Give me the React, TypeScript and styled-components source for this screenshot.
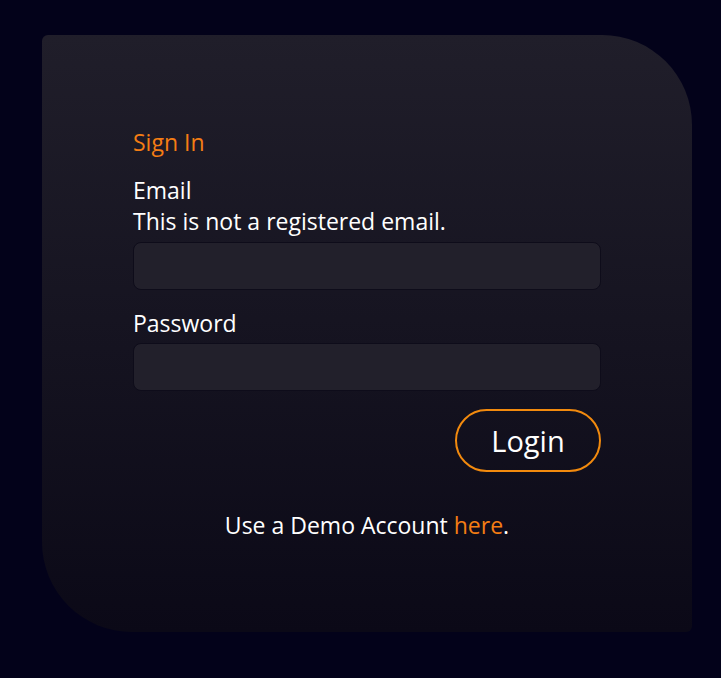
import styled, { createGlobalStyle } from "styled-components";

const GlobalStyle = createGlobalStyle`
  html, body {
    margin: 0;
    padding: 0;
    background: #03021a;
    font-family: "Open Sans", "Noto Sans", sans-serif;
    color: #ffffff;
  }
`;

const Page = styled.div`
  min-height: 678px;
  box-sizing: border-box;
  padding: 35px 0 0 42px;
`;

const Card = styled.div`
  box-sizing: border-box;
  width: 650px;
  height: 597px;
  padding: 92px 91px 0;
  border-radius: 6px 90px 6px 90px;
  background: linear-gradient(180deg, #201e2a 0%, #0b0917 100%);
  display: flex;
  flex-direction: column;
`;

const Title = styled.h1`
  margin: 0 0 17px;
  font-size: 23px;
  font-weight: 400;
  line-height: 31px;
  color: #f47d14;
`;

const Label = styled.label`
  display: block;
  font-size: 23px;
  line-height: 31px;
  color: #ffffff;
`;

const ErrorText = styled.div`
  font-size: 23px;
  line-height: 31px;
  color: #ffffff;
`;

const Input = styled.input<{ $gap: number }>`
  box-sizing: border-box;
  width: 100%;
  height: 48px;
  margin: ${(p) => p.$gap}px 0 18px;
  border: 1px solid #0e0c1a;
  border-radius: 8px;
  background: #22202b;
  color: #ffffff;
  font-family: inherit;
  font-size: 18px;
  padding: 0 12px;
  outline: none;
`;

const Actions = styled.div`
  display: flex;
  justify-content: flex-end;
`;

const LoginButton = styled.button`
  box-sizing: border-box;
  width: 146px;
  height: 63px;
  border: 2px solid #f28a0e;
  border-radius: 32px;
  background: transparent;
  color: #ffffff;
  font-family: inherit;
  font-size: 29px;
  cursor: pointer;
`;

const DemoText = styled.p`
  margin: 38px 0 0;
  text-align: center;
  font-size: 23px;
  line-height: 31px;
`;

const DemoLink = styled.a`
  color: #f47d14;
  text-decoration: none;
  cursor: pointer;
`;

export default function App() {
  return (
    <>
      <GlobalStyle />
      <Page>
        <Card>
          <Title>Sign In</Title>
          <Label htmlFor="email">Email</Label>
          <ErrorText>This is not a registered email.</ErrorText>
          <Input id="email" type="email" $gap={5} />
          <Label htmlFor="password">Password</Label>
          <Input id="password" type="password" $gap={4} />
          <Actions>
            <LoginButton>Login</LoginButton>
          </Actions>
          <DemoText>
            Use a Demo Account <DemoLink>here</DemoLink>.
          </DemoText>
        </Card>
      </Page>
    </>
  );
}
